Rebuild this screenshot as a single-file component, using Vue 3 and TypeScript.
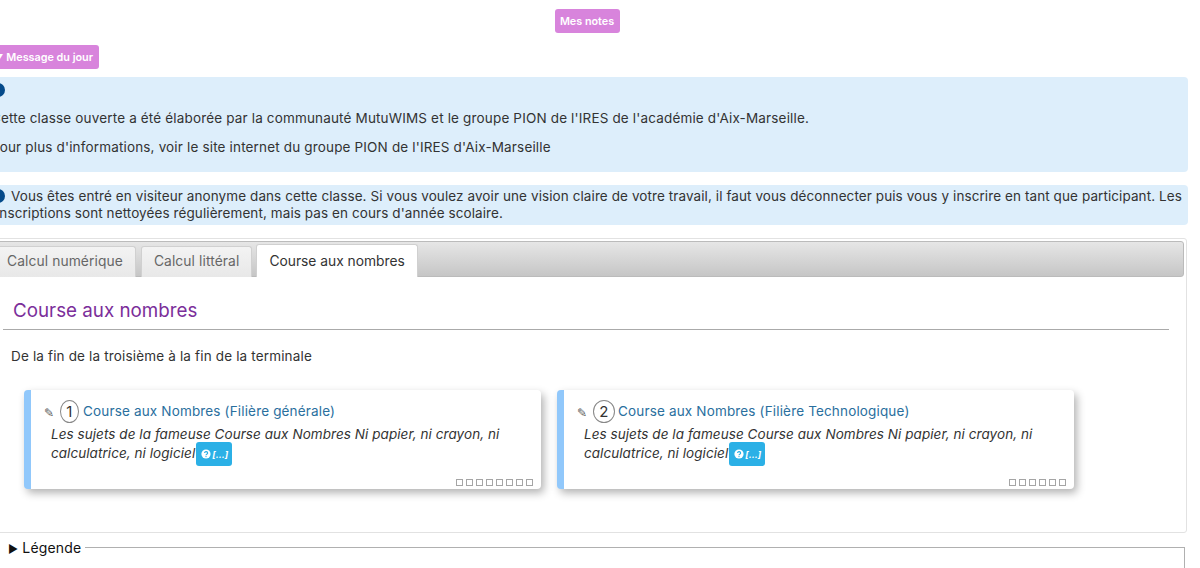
<script setup lang="ts">
interface Card { num: number; title: string; squares: number }
const cards: Card[] = [
  { num: 1, title: 'Course aux Nombres (Filière générale)', squares: 8 },
  { num: 2, title: 'Course aux Nombres (Filière Technologique)', squares: 6 },
]
const tabs = ['Calcul numérique', 'Calcul littéral', 'Course aux nombres']
</script>

<template>
  <div class="page">
    <div class="top"><button class="pink">Mes notes</button></div>
    <button class="pink motd"><span class="tri">▼</span>Message du jour</button>
    <div class="info first">
      <div class="dot-row"><span class="dot"></span></div>
      <p>Cette classe ouverte a été élaborée par la communauté MutuWIMS et le groupe PION de l'IRES de l'académie d'Aix-Marseille.</p>
      <p>Pour plus d'informations, voir le site internet du groupe PION de l'IRES d'Aix-Marseille</p>
    </div>
    <div class="info second">
      <span class="dot inline"></span>Vous êtes entré en visiteur anonyme dans cette classe. Si vous voulez avoir une vision claire de votre travail, il faut vous déconnecter puis vous y inscrire en tant que participant. Les inscriptions sont nettoyées régulièrement, mais pas en cours d'année scolaire.
    </div>
    <div class="panel">
      <div class="tabbar">
        <div v-for="(t, i) in tabs" :key="t" class="tab" :class="{ active: i === 2 }">{{ t }}</div>
      </div>
      <div class="body">
        <h2>Course aux nombres</h2>
        <p class="lead">De la fin de la troisième à la fin de la terminale</p>
        <div class="cards">
          <div v-for="c in cards" :key="c.num" class="card">
            <div class="card-title">
              <span class="pencil">✎</span>
              <span class="num" :class="{ wide: c.num > 1 }">{{ c.num }}</span>
              <a>{{ c.title }}</a>
            </div>
            <div class="desc">Les sujets de la fameuse Course aux Nombres Ni papier, ni crayon, ni calculatrice, ni logiciel<span class="more"><svg width="10" height="10" viewBox="0 0 10 10"><circle cx="5" cy="5" r="4.6" fill="#fff"/><path d="M3.6 4a1.5 1.4 0 1 1 2.2 1.2c-.6.3-.8.5-.8 1" fill="none" stroke="#2bb0e6" stroke-width="1.2"/><circle cx="5" cy="7.6" r=".7" fill="#2bb0e6"/></svg>[...]</span></div>
            <div class="squares"><span v-for="n in c.squares" :key="n" class="sq"></span></div>
          </div>
        </div>
      </div>
    </div>
    <fieldset class="legend-box">
      <legend><span class="play">►</span> Légende</legend>
    </fieldset>
  </div>
</template>

<style>
html, body { margin: 0; background: #fff; overflow: hidden; }
</style>

<style scoped>
.page {
  width: 1200px;
  height: 568px;
  margin-left: -12px;
  padding-top: 9px;
  box-sizing: border-box;
  font-family: Inter, "Open Sans", sans-serif;
  font-size: 13.5px;
  letter-spacing: .16px;
  color: #333;
  overflow: hidden;
}
.top { display: flex; justify-content: center; width: 1198px; height: 24px; }
.top .pink { width: 65px; }
.pink {
  display: block;
  height: 24px;
  padding: 0;
  border: 0;
  border-radius: 3px;
  background: #d884dc;
  color: #fff;
  font: 600 10.8px Inter, sans-serif;
  letter-spacing: 0;
}
.motd { margin-top: 12px; width: 111px; text-align: left; padding-left: 6px; }
.tri { font-size: 9px; margin-right: 3px; }
.info {
  width: 1200px;
  box-sizing: border-box;
  background: #ddeefb;
  border-radius: 4px;
}
.first { margin-top: 8px; height: 95px; padding: 5px 8px 0 3px; }
.first p { margin: 0; line-height: 18px; }
.first p + p { margin-top: 11px; }
.dot-row { height: 18px; margin-bottom: 9px; }
.dot { display: inline-block; width: 14px; height: 14px; border-radius: 50%; background: #044a8a; margin-top: 1px; }
.second { margin-top: 13px; height: 40px; padding: 3px 4px 0 8px; line-height: 17px; letter-spacing: .09px; }
.dot.inline { margin: 0 6px 0 -5px; vertical-align: -2px; }
.panel {
  margin-top: 13px;
  width: 1199px;
  height: 295px;
  box-sizing: border-box;
  border: 1px solid #e2e2e2;
  border-radius: 3px;
  padding: 2px;
}
.tabbar {
  display: flex;
  gap: 5px;
  align-items: flex-end;
  height: 36px;
  box-sizing: border-box;
  border: 1px solid #bbb;
  border-radius: 3px;
  padding-left: 2px;
  background: linear-gradient(#e6e6e6, #c6c6c6);
}
.tab {
  height: 30px;
  margin-bottom: -1px;
  line-height: 28px;
  padding: 0 12px;
  font-size: 13.8px;
  letter-spacing: .1px;
  color: #666;
  background: linear-gradient(#f3f3f3, #e8e8e8);
  border: 1px solid #d0d0d0;
  border-bottom: 0;
  border-radius: 3px 3px 0 0;
}
.tab.active { background: #fff; color: #333; height: 32px; line-height: 32px; margin-left: -1px; letter-spacing: 0; }
.body { padding-left: 12px; }
h2 {
  margin: 0;
  width: 1166px;
  height: 53px;
  padding: 22px 0 0 10px;
  box-sizing: border-box;
  border-bottom: 1px solid #aaa;
  font: 400 18.8px Inter, sans-serif;
  letter-spacing: 0;
  color: #7b2e9a;
}
.lead { margin: 16px 0 0 8px; line-height: 20px; }
.cards { display: flex; gap: 16px; margin: 24px 0 0 21px; }
.card {
  position: relative;
  width: 517px;
  height: 99px;
  box-sizing: border-box;
  border-left: 7px solid #91c8fb;
  border-radius: 4px;
  padding: 9px 30px 0 13px;
  background: #fff;
  box-shadow: 3px 4px 9px rgba(0, 0, 0, .3);
}
.card-title { display: flex; align-items: center; height: 24px; color: #2a6f9e; }
.pencil { font-size: 12px; color: #555; margin-right: 4px; margin-top: 3px; width: 12px; }
.num {
  flex: none;
  box-sizing: border-box;
  width: 19px;
  height: 23px;
  border: 1px solid #888;
  border-radius: 50%;
  text-align: center;
  line-height: 21px;
  color: #333;
  font-size: 15px;
  font-weight: 400;
  margin-right: 4px;
}
.num.wide { width: 22px; margin-right: 3px; }
.desc { font-style: italic; line-height: 19px; margin: 2px 0 0 7px; letter-spacing: .06px; }
.more {
  display: inline-flex;
  align-items: center;
  gap: 1px;
  height: 24px;
  margin: -6px 0 -2px 1px;
  padding: 0 4px 0 5px;
  background: #2bb0e6;
  color: #fff;
  border-radius: 3px;
  font-size: 9px;
  font-weight: 700;
  letter-spacing: 0;
  vertical-align: top;
  position: relative;
  top: 4px;
}
.squares { position: absolute; right: 8px; bottom: 3px; display: flex; gap: 3px; }
.sq { width: 7px; height: 7px; border: 1px solid #a5a5a5; box-sizing: border-box; }
.legend-box {
  margin: 6px 0 0 0;
  width: 1197px;
  height: 60px;
  box-sizing: border-box;
  padding: 0;
  border: 1px solid #b0b0b0;
  border-radius: 0;
}
.legend-box legend { padding: 0 4px 0 19px; margin-left: 0; color: #111; font-size: 14px; }
.play { font-size: 11px; }
</style>
